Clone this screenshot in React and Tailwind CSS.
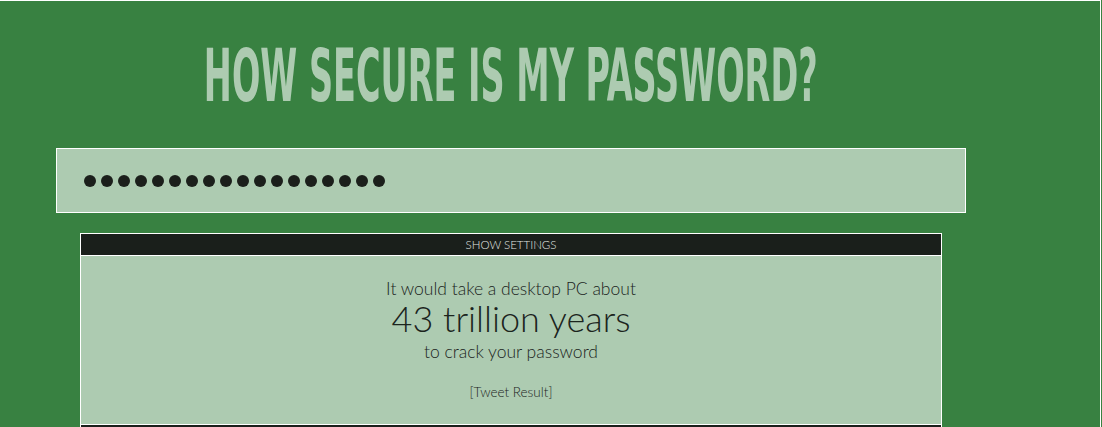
export default function App() {
  const dots = Array.from({ length: 18 });
  return (
    <div className="w-[1102px] h-[427px] overflow-hidden bg-[#388141]">
      <div className="w-[1101px] h-[427px] border-t border-r border-white bg-[#388141]">
        <div className="h-[147px] flex items-start justify-center pr-[78px]">
          <h1
            className="mt-[41px] text-[73px] leading-[68px] font-bold text-[#adcbb1] origin-center scale-x-[0.51] whitespace-nowrap"
            style={{ fontFamily: '"DejaVu Sans Condensed", "DejaVu Sans", sans-serif' }}
          >
            HOW SECURE IS MY PASSWORD?
          </h1>
        </div>
        <div className="ml-[56px] w-[910px] h-[65px] border border-white bg-[#adcbb1] flex items-center pl-[27px] gap-[5px]">
          {dots.map((_, i) => (
            <span key={i} className="block w-[12px] h-[12px] rounded-full bg-[#1b1f1b]" />
          ))}
        </div>
        <div
          className="ml-[80px] mt-[20px] w-[862px] border border-white font-light"
          style={{ fontFamily: '"Lato Light", Lato, "Open Sans", sans-serif' }}
        >
          <div className="h-[22px] bg-[#1a1f1b] border-b border-white flex items-center justify-center text-[11.5px] text-[#e3e8e4]">
            SHOW SETTINGS
          </div>
          <div className="h-[169px] bg-[#adcbb1] border-b border-white flex flex-col items-center text-[#1b241d]">
            <div className="mt-[23px] text-[17.5px] leading-[20px]">It would take a desktop PC about</div>
            <div className="text-[36px] leading-[38px]">43 trillion years</div>
            <div className="mt-[5px] text-[17.5px] leading-[20px]">to crack your password</div>
            <div className="mt-[22px] text-[13.5px] leading-[16px]">[Tweet Result]</div>
          </div>
          <div className="h-[10px] bg-[#1a1f1b]" />
        </div>
      </div>
    </div>
  );
}
